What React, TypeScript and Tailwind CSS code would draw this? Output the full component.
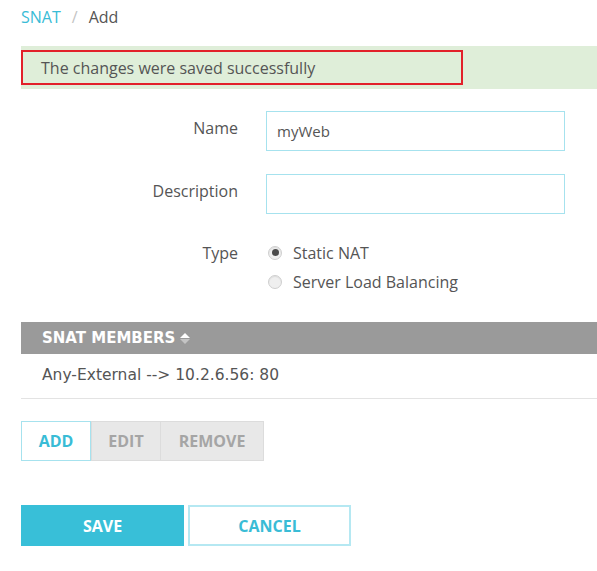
import { useState } from 'react';

const font = "font-['Open_Sans',sans-serif]";
const tableFont = "font-['DejaVu_Sans',Verdana,sans-serif]";

function Radio({ checked, label }: { checked: boolean; label: string }) {
  return (
    <label className="flex items-center h-[29px] text-[16px] text-[#555]">
      <span className="w-[14px] h-[14px] rounded-full border border-[#cfcfcf] bg-[#efefef] flex items-center justify-center mr-[11px] shadow-[inset_0_1px_1px_rgba(0,0,0,0.08)]">
        {checked && <span className="w-[7px] h-[7px] rounded-full bg-[#4a4a4a]" />}
      </span>
      {label}
    </label>
  );
}

export default function App() {
  const [name] = useState('myWeb');

  return (
    <div className={`min-h-screen bg-white pl-[21px] pt-[5px] ${font}`}>
      <nav className="h-[24px] flex items-center text-[16px]">
        <span className="text-[#39bcd6]">SNAT</span>
        <span className="text-[#c4c4c4] mx-[11px]">/</span>
        <span className="text-[#555]">Add</span>
      </nav>

      {/* saved message */}
      <div className="mt-[17px] h-[43px] bg-[#dfeed9] flex items-center">
        <div className="w-[442px] h-[35px] border-2 border-[#e2202a] flex items-center pl-[18px] text-[16px] text-[#555]">
          The changes were saved successfully
        </div>
      </div>

      <div className="mt-[22px]">
        <div className="flex">
          <div className="w-[217px] text-right text-[16px] text-[#555] pt-[5px]">Name</div>
          <input
            value={name}
            readOnly
            className="ml-[28px] w-[299px] h-[40px] border border-[#a6e2ee] px-[10px] text-[15px] text-[#555] outline-none"
          />
        </div>
        <div className="flex mt-[23px]">
          <div className="w-[217px] text-right text-[16px] text-[#555] pt-[5px]">Description</div>
          <input
            readOnly
            className="ml-[28px] w-[299px] h-[40px] border border-[#a6e2ee] px-[10px] text-[15px] text-[#555] outline-none"
          />
        </div>
        <div className="flex mt-[24px]">
          <div className="w-[217px] text-right text-[16px] text-[#555] pt-[3px]">Type</div>
          <div className="ml-[30px]">
            <Radio checked label="Static NAT" />
            <Radio checked={false} label="Server Load Balancing" />
          </div>
        </div>
      </div>

      {/* members table */}
      <div className={`mt-[26px] ${tableFont}`}>
        <div className="h-[32px] bg-[#9a9a9a] flex items-center pl-[21px] text-white text-[15px] font-bold">
          SNAT MEMBERS
          <span className="ml-[5px] flex flex-col gap-[1px]">
            <svg width="10" height="5" viewBox="0 0 10 5"><path d="M5 0 10 5H0z" fill="#ffffff" /></svg>
            <svg width="10" height="5" viewBox="0 0 10 5"><path d="M0 0h10L5 5z" fill="#c4c4c4" /></svg>
          </span>
        </div>
        <div className="h-[45px] border-b border-[#e3e3e3] flex items-center pl-[21px] text-[15.5px] text-[#555]">
          Any-External --&gt; 10.2.6.56: 80
        </div>
      </div>

      <div className="mt-[22px] flex text-[16px] font-bold">
        <button className="w-[70px] h-[40px] border border-[#a6e2ee] bg-white text-[#39bcd6]">ADD</button>
        <button className="w-[70px] h-[40px] border border-[#dcdcdc] bg-[#e8e8e8] text-[#a5a5a5]">EDIT</button>
        <button className="w-[103px] h-[40px] border border-[#dcdcdc] border-l-0 bg-[#e8e8e8] text-[#a5a5a5]">REMOVE</button>
      </div>

      <div className="mt-[44px] flex gap-[4px] text-[16px] font-bold">
        <button className="w-[163px] h-[41px] bg-[#38bfd8] text-white">SAVE</button>
        <button className="w-[163px] h-[41px] border-2 border-[#b5e8f2] bg-white text-[#39bcd6]">CANCEL</button>
      </div>
    </div>
  );
}
